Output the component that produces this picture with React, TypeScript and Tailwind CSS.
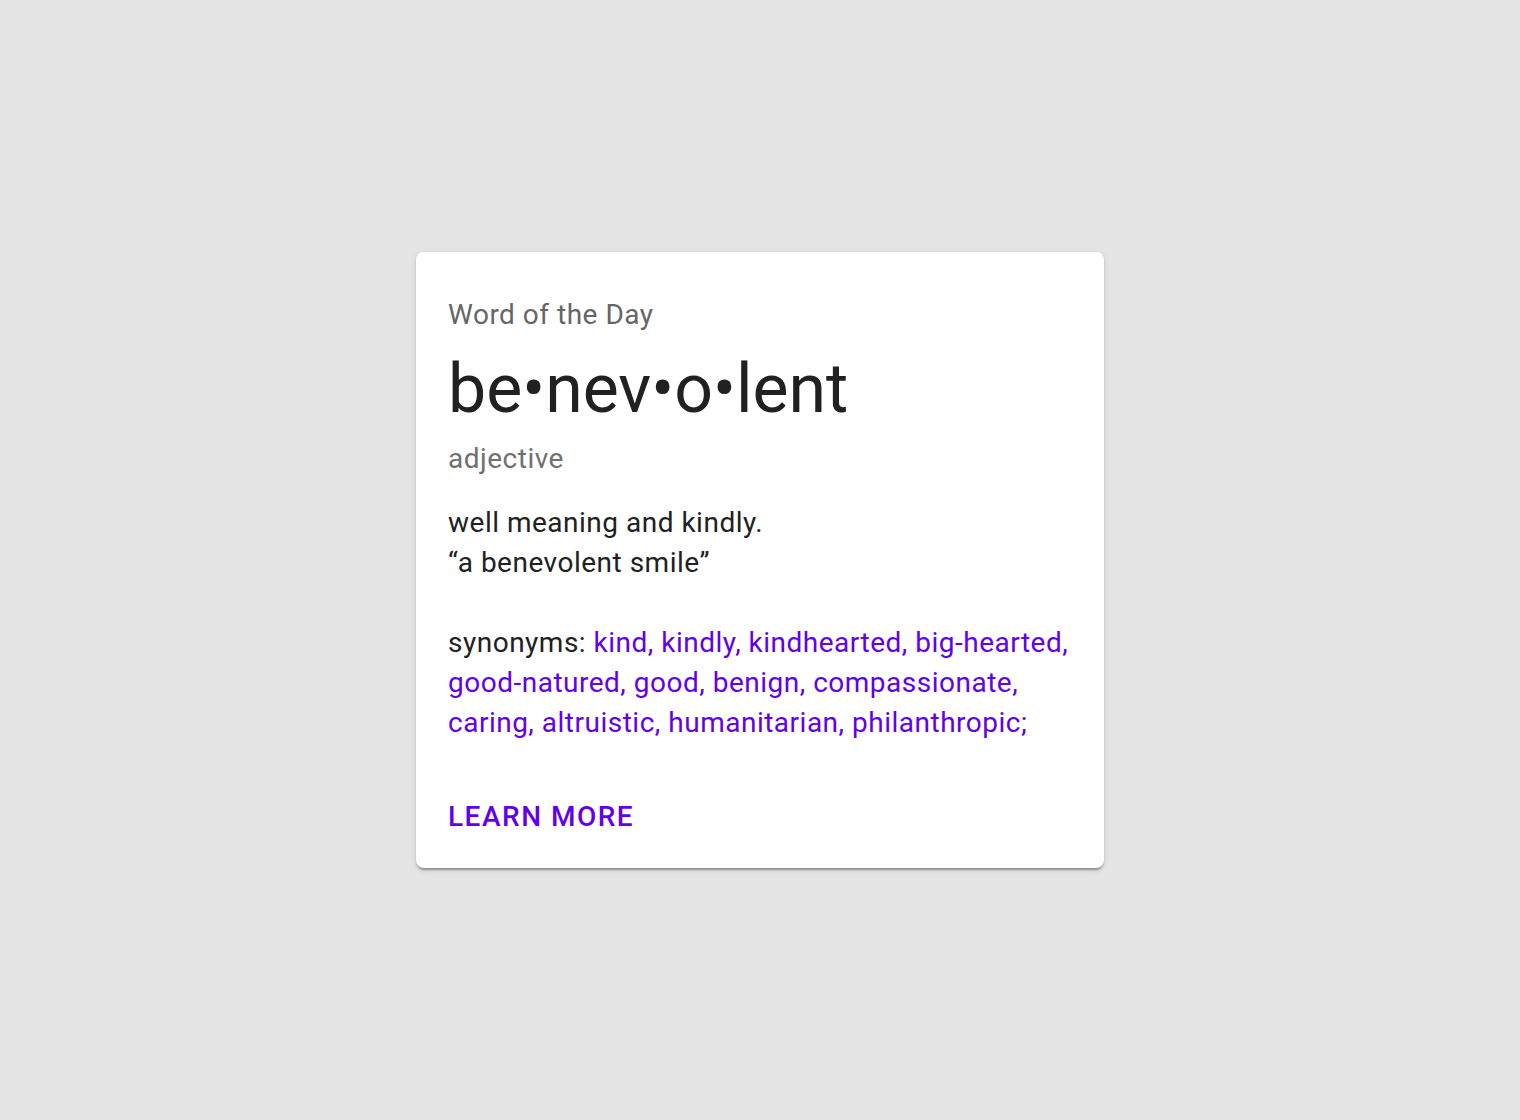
export default function App() {
  const synonyms =
    "kind, kindly, kindhearted, big-hearted, good-natured, good, benign, compassionate, caring, altruistic, humanitarian, philanthropic;";

  return (
    <div className="min-h-screen w-full bg-[#e5e5e5] flex items-center justify-center font-['Roboto',sans-serif]">
      <div className="w-[688px] bg-white rounded-[8px] px-8 pt-8 pb-[31px] shadow-[0_4px_2px_-2px_rgba(0,0,0,0.2),0_2px_2px_0_rgba(0,0,0,0.14),0_2px_6px_0_rgba(0,0,0,0.12)]">
        <p className="mt-[11px] text-[28px] leading-[40px] tracking-[0.5px] text-[#666666]">
          Word of the Day
        </p>
        <h2 className="mt-[14px] text-[68px] leading-[80px] font-normal text-[#212121]">
          be•nev•o•lent
        </h2>
        <p className="mt-[10px] text-[28px] leading-[40px] tracking-[0.5px] text-[#707070]">
          adjective
        </p>
        <p className="mt-[24px] text-[28px] leading-[40px] tracking-[0.5px] text-[#212121]">
          well meaning and kindly.
          <br />
          “a benevolent smile”
        </p>
        <p className="mt-[40px] text-[28px] leading-[40px] tracking-[0.5px] text-[#212121]">
          synonyms: <span className="text-[#6200ee]">{synonyms}</span>
        </p>
        <div className="mt-[54px]">
          <a
            href="#"
            className="block text-[28px] leading-[40px] font-medium uppercase tracking-[1.5px] text-[#6200ee]"
          >
            Learn More
          </a>
        </div>
      </div>
    </div>
  );
}
